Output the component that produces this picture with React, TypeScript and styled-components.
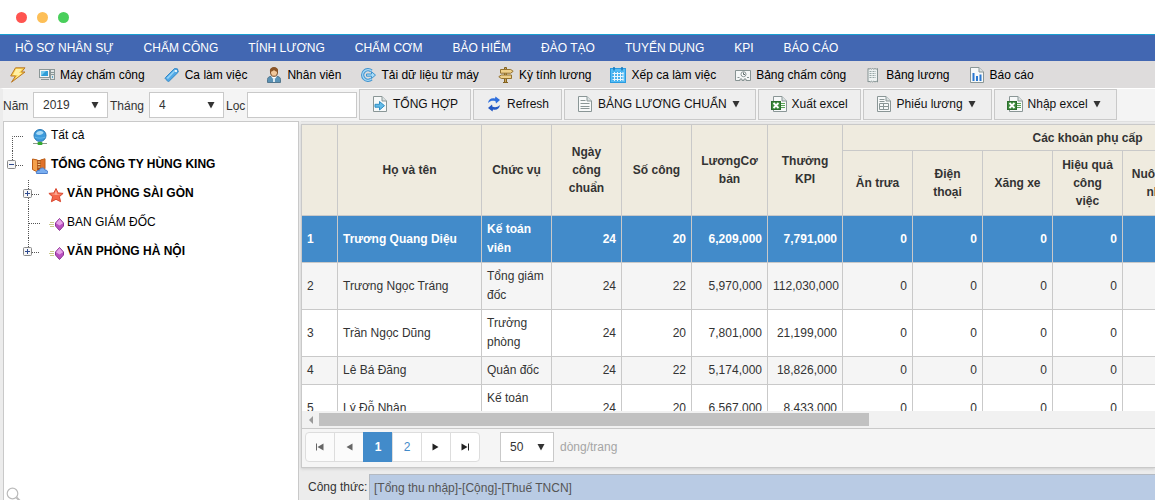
import React from 'react';
import styled, { createGlobalStyle, css } from 'styled-components';

const line = '#c9c9c9';
const blue = '#428bca';

const GlobalStyle = createGlobalStyle`
  *, *::before, *::after { box-sizing: border-box; }
  body { margin: 0; background: #fff; }
  body, button, input, select, table {
    font-family: "Liberation Sans", Arial, sans-serif;
    font-size: 12px;
    color: #333;
  }
`;

const Page = styled.div`
  display: flex;
  flex-direction: column;
  height: 100vh;
  overflow: hidden;
  white-space: nowrap;
`;

const TitleBar = styled.header`
  display: flex;
  align-items: center;
  gap: 10px;
  flex: none;
  height: 34px;
  padding-left: 16px;
`;

const Dot = styled.span<{ $color: string }>`
  width: 11px;
  height: 11px;
  border-radius: 50%;
  background: ${(p) => p.$color};
`;

const Menu = styled.nav`
  display: flex;
  flex: none;
  height: 27px;
  border-top: 1px solid #1a9fd0;
  background: #4267b2;
`;

const MenuLink = styled.a`
  display: flex;
  align-items: center;
  padding: 0 15px;
  color: #fff;
  text-decoration: none;
`;

const ShortcutBar = styled.nav`
  display: flex;
  align-items: center;
  gap: 19px;
  flex: none;
  height: 27px;
  padding-left: 9px;
  background: #dedcdc;
`;

const Shortcut = styled.a`
  display: flex;
  align-items: center;
  gap: 5px;
  color: #000;
  text-decoration: none;
`;

const QuickStart = styled(Shortcut)`
  margin-right: -7px;
`;

const Toolbar = styled.div`
  display: flex;
  align-items: flex-start;
  gap: 2px;
  flex: none;
  height: 33px;
  border-top: 1px solid #fff;
  border-left: 3px solid #ececec;
  background: #f4f4f4;
`;

const Field = styled.div`
  display: flex;
  align-items: center;
  height: 32px;
`;

const FieldLabel = styled.label<{ $width: number }>`
  width: ${(p) => p.$width}px;
  padding-top: 2px;
`;

const SelectBox = styled.span<{ $width: number }>`
  position: relative;
  display: block;
  width: ${(p) => p.$width}px;

  svg {
    position: absolute;
    right: 5px;
    top: 50%;
    margin-top: -5px;
    pointer-events: none;
  }
`;

const Select = styled.select<{ $height?: number }>`
  appearance: none;
  display: block;
  width: 100%;
  height: ${(p) => p.$height ?? 26}px;
  padding: 0 9px;
  border: 1px solid ${line};
  border-radius: 0;
  background: #fff;
`;

const FilterInput = styled.input`
  width: 110px;
  height: 26px;
  padding: 0 5px;
  border: 1px solid ${line};
  background: #fff;
`;

const ToolButton = styled.button`
  display: flex;
  align-items: center;
  gap: 5px;
  flex: none;
  height: 31px;
  padding: 0 12px 2px;
  border: 1px solid ${line};
  background: #eee;
  color: #111;
`;

const Main = styled.main`
  display: grid;
  grid-template-columns: 296px minmax(0, 1fr);
  grid-template-rows: minmax(0, 1fr);
  gap: 2px;
  flex: 1;
  min-height: 0;
  padding-left: 3px;
  background: #ececec;
`;

const TreePanel = styled.aside`
  display: flex;
  flex-direction: column;
  justify-content: space-between;
  overflow: hidden;
  border: 1px solid ${line};
  border-bottom: 0;
  background: #fff;
`;

const TreeList = styled.ul`
  margin: 0;
  padding: 0;
  list-style: none;
`;

const TreeRow = styled.li<{ $level: number; $bold?: boolean }>`
  display: flex;
  align-items: center;
  height: 29px;
  padding-left: ${(p) => p.$level * 16}px;
  color: #000;
  font-weight: ${(p) => (p.$bold ? 'bold' : 'normal')};
`;

const TreeToggle = styled.button`
  display: block;
  width: 24px;
  height: 29px;
  margin-right: 4px;
  padding: 0;
  border: 0;
  background: none;
`;

const TreeLines = styled.span`
  width: 24px;
  height: 29px;
  margin-right: 4px;
`;

const TreeName = styled.span`
  padding: 0 0 3px 3px;
`;

const TreeFooter = styled.div`
  height: 14px;
  padding-left: 1px;
`;

const Content = styled.section`
  display: flex;
  flex-direction: column;
  min-width: 0;
  min-height: 0;
  padding-top: 2px;
  border-top: 1px solid #e0e0e0;
`;

const GridBox = styled.div`
  display: flex;
  flex-direction: column;
  flex: 1;
  min-height: 0;
  border: solid ${line};
  border-width: 1px 0 1px 1px;
  box-shadow: 0 1px 3px #ccc;
  background: #fff;
`;

const GridBody = styled.div`
  flex: 1;
  min-height: 0;
  overflow: hidden;
`;

const Table = styled.table`
  table-layout: fixed;
  width: 1030px;
  border-collapse: separate;
  border-spacing: 0;
  white-space: normal;
`;

const Th = styled.th<{ $height?: number }>`
  height: ${(p) => (p.$height ? `${p.$height}px` : 'auto')};
  padding: 0 8px;
  border-bottom: 1px solid ${line};
  border-left: 1px solid ${line};
  background: #efebdf;
  line-height: 18px;
  text-align: center;

  thead tr:first-child &:first-child { border-left: 0; }
`;

const Td = styled.td<{ $num?: boolean }>`
  padding: 4px 5px;
  border-bottom: 1px solid ${line};
  border-left: 1px solid ${line};
  line-height: 19px;
  text-align: ${(p) => (p.$num ? 'right' : 'left')};

  &:first-child { border-left: 0; }
`;

const Tr = styled.tr<{ $selected: boolean; $striped: boolean }>`
  background: ${(p) => (p.$striped ? '#f5f5f5' : '#fff')};
  ${(p) =>
    p.$selected &&
    css`
      background: ${blue};
      color: #fff;
      font-weight: bold;
    `}
`;

const ScrollTrack = styled.div`
  display: flex;
  align-items: center;
  flex: none;
  height: 17px;
  background: #f1f1f1;
`;

const ScrollArrow = styled.span`
  display: flex;
  justify-content: center;
  width: 17px;
`;

const ScrollThumb = styled.div`
  width: 64.5%;
  height: 13px;
  background: #c1c1c1;
`;

const Pager = styled.div`
  display: flex;
  align-items: center;
  flex: none;
  height: 39px;
  padding: 0 0 2px 3px;
  border-top: 1px solid ${line};
  background: #f5f5f5;
`;

const PageButton = styled.button<{ $active?: boolean }>`
  display: flex;
  align-items: center;
  justify-content: center;
  width: 30px;
  height: 30px;
  margin-right: -1px;
  padding: 0;
  border: 1px solid ${(p) => (p.$active ? blue : '#ddd')};
  background: ${(p) => (p.$active ? blue : '#fff')};
  color: ${(p) => (p.$active ? '#fff' : blue)};
  font-weight: ${(p) => (p.$active ? 'bold' : 'normal')};

  &:first-child { border-radius: 4px 0 0 4px; }
  &:disabled { background: #fbfbfb; }
`;

const PageButtons = styled.div`
  display: flex;
  margin-right: 21px;

  button:last-child { border-radius: 0 4px 4px 0; }
`;

const PageSizeLabel = styled.label`
  padding-left: 6px;
  color: #a5a5a5;
`;

const Formula = styled.div`
  display: grid;
  grid-template-columns: 68px minmax(0, 1fr);
  align-items: center;
  flex: none;
  height: 32px;
  padding-top: 6px;
`;

const FormulaLabel = styled.label`
  padding-left: 7px;
`;

const FormulaInput = styled.input`
  width: 100%;
  height: 26px;
  padding: 0 4px;
  border: solid #b4bac2;
  border-width: 1px 0 0 1px;
  background: #b9cbe4;
  color: #555;
`;

const Svg = ({ children }: { children: React.ReactNode }) => (
  <svg width="16" height="16" viewBox="0 0 16 16" aria-hidden="true">{children}</svg>
);

const Caret = ({ width = 12 }: { width?: number }) => (
  <svg width={width} height="10" viewBox={`0 0 ${width} 10`} aria-hidden="true">
    <path d="M0.5 2h7l-3.5 6.5z" fill="#333" />
  </svg>
);

const BoltIcon = () => (
  <svg width="18" height="16" viewBox="0 0 18 16" aria-hidden="true">
    <path d="M6.500 .8h9.500L12.500 5h3.500L2.500 15.200 6.500 9H1.700z" fill="#fbd34b" stroke="#b9782a" strokeLinejoin="round" />
    <path d="M7 2h6L10 6h3L6.500 11.500 8.800 8H4z" fill="#fff0a5" />
  </svg>
);

const ComputerIcon = () => (
  <Svg>
    <rect x=".5" y="2.500" width="10" height="8" fill="#f4f6f6" stroke="#8b9797" />
    <rect x="2" y="4" width="7" height="5" fill="#2f9ed8" />
    <path d="M2 9l5-5H2z" fill="#74c8ec" />
    <path d="M2 12.500h8" stroke="#8b9797" />
    <rect x="11.500" y="2.500" width="4" height="10" fill="#dfe4e4" stroke="#8b9797" />
    <path d="M12 5.500h3M12 7.500h3" stroke="#8b9797" />
    <rect x="13" y="9" width="1" height="2" fill="#5ba4c8" />
  </Svg>
);

const TagIcon = () => (
  <Svg>
    <path d="M1.500 10.500L10.500 1.600l3 .3.800 3.200L5.300 14c-.6.600-1.200.6-1.700 0L1.500 12c-.5-.5-.5-1 0-1.500z" fill="#52a9e6" stroke="#2f86c6" />
    <path d="M2.500 11L10.800 2.800l1.500.2L4 12z" fill="#95d3f7" />
    <circle cx="12" cy="4" r="1.100" fill="#fff" />
  </Svg>
);

const PersonIcon = () => (
  <Svg>
    <path d="M1.500 15.500v-3c0-2 1.500-3 4-3.300h5c2.500.3 4 1.300 4 3.300v3z" fill="#5b92b5" stroke="#54778d" />
    <path d="M5 9.200L8 13l3-3.800z" fill="#fff" />
    <path d="M8 11v4" stroke="#dbe8ef" strokeWidth="2" />
    <ellipse cx="8" cy="5" rx="3.500" ry="4.300" fill="#f2c89b" stroke="#7a4a22" />
    <path d="M4 5C3.500 1 6 .3 8 .3s4.500.7 4 4.700c-2-.3-3-1-4-2-1 1.200-2.400 1.800-4 2z" fill="#8a5528" />
  </Svg>
);

const SyncIcon = () => (
  <Svg>
    <path d="M11.500 4A5.300 5.300 0 1 0 11.500 12" fill="none" stroke="#3f93cf" strokeWidth="3.400" />
    <path d="M11.500 4A5.300 5.300 0 1 0 11.500 12" fill="none" stroke="#a5d8f6" strokeWidth="1.400" />
    <path d="M6.500 7h5V4.700l4 3.400-4 3.400V9.200h-5z" fill="#a9dcf7" stroke="#3f93cf" />
  </Svg>
);

const SignIcon = () => (
  <Svg>
    <path d="M6.500.500h2v15h-2z" fill="#c9a45a" stroke="#83621f" />
    <path d="M2.500 2.500h10.200l2.500 1.800-2.500 1.900H2.500z" fill="#efd08a" stroke="#94722f" />
    <path d="M13.500 8H3.300L.8 9.700l2.500 1.800h10.200z" fill="#efd08a" stroke="#94722f" />
    <path d="M5 15.500h5" stroke="#83621f" />
  </Svg>
);

const CalendarIcon = () => (
  <Svg>
    <rect x=".5" y="1.500" width="15" height="14" fill="#55bdf5" stroke="#2a9be0" />
    <rect x="2" y="4.500" width="12" height="9.500" fill="#45b0ee" />
    <path d="M2.500 6.500h11M2.500 9.500h11M2.500 12.500h11M4.500 5v9M7.500 5v9M10.500 5v9M13 5v9" stroke="#e8f6fd" />
    <path d="M4 0v3.500M12 0v3.500" stroke="#1678bb" strokeWidth="1.500" />
  </Svg>
);

const TimeCardIcon = () => (
  <Svg>
    <path d="M.5 3.500h15v10H11v-1.500H9v1.500H7V12H5v1.500H.5z" fill="#f5f7f7" stroke="#879393" />
    <circle cx="8.500" cy="7.200" r="2.500" fill="#fff" stroke="#879393" />
    <path d="M8.500 5.500v2H10" fill="none" stroke="#5f6c6c" />
    <path d="M2.500 10.500h2M12 10.500h2" stroke="#879393" />
  </Svg>
);

const ReceiptIcon = () => (
  <Svg>
    <path d="M3 1.500l1 .7 1.200-.7 1.200.7 1.200-.7 1.200.7 1.200-.7 1.200.7 1.300-.7v13.500l-1.300-.8-1.200.8-1.200-.8-1.200.8-1.200-.8-1.200.8-1.200-.8-1 .8z" fill="#eef2f2" stroke="#859393" />
    <path d="M4.500 4.500h6.500M4.500 6.500h6.500M4.500 8.500h6.500M4.500 10.500h6.500" stroke="#97a6a6" strokeDasharray="2 1" />
  </Svg>
);

const Sheet = ({ children }: { children: React.ReactNode }) => (
  <Svg>
    <path d="M1.500.500H10l4.500 4.500v10.500h-13z" fill="#f7f9f9" stroke="#8a9696" />
    <path d="M10 .5V5h4.500" fill="#dbe2e2" stroke="#8a9696" />
    {children}
  </Svg>
);

const ChartIcon = () => (
  <Sheet>
    <path d="M4.500 14V6M8 14V9M11.500 14V7.500" stroke="#2b78d0" strokeWidth="2" />
  </Sheet>
);

const ExportIcon = () => (
  <Sheet>
    <path d="M3 8.300h4.500V5.500l5 4.200-5 4.300v-2.800H3z" fill="#63bbe8" stroke="#2f8dc2" />
  </Sheet>
);

const ListIcon = () => (
  <Sheet>
    <path d="M3.500 4.500h5M3.500 7.500h9M3.500 10.500h9M3.500 12.500h9" stroke="#8a9696" />
  </Sheet>
);

const FormIcon = () => (
  <Sheet>
    <path d="M3.500 3.500h5M3.500 5.500h5" stroke="#8a9696" />
    <path d="M3.500 7.500h9v6h-9zM3.500 10.500h9M7.500 7.500v6" fill="none" stroke="#8a9696" />
  </Sheet>
);

const ExcelIcon = () => (
  <Svg>
    <path d="M2.500.500H11l4.500 4.500v10.500h-13z" fill="#f7f9f9" stroke="#8a9696" />
    <path d="M11 .5V5h4.500" fill="#dbe2e2" stroke="#8a9696" />
    <path d="M10 7.500h4M10 9.500h4M10 11.500h4" stroke="#58a555" />
    <rect x=".5" y="5.500" width="9" height="8" fill="#3d8b3c" stroke="#2c6e2e" />
    <path d="M2.500 7l5 5M7.500 7l-5 5" stroke="#fff" strokeWidth="1.800" />
  </Svg>
);

const RefreshIcon = () => (
  <Svg>
    <path d="M2 7c.5-3.800 3.500-5.500 7-4.500L9.500 .5l4.500 3.500-4 3.500-.5-2.300C6.500 4.500 4.500 4.800 2 7z" fill="#2f6fdd" />
    <path d="M14 9c-.5 3.800-3.500 5.500-7 4.500l-.5 2-4.500-3.500L6 8.500l.5 2.300c3 .7 5 .4 7.500-1.800z" fill="#2458c4" />
  </Svg>
);

const GlobeIcon = () => (
  <Svg>
    <circle cx="8" cy="6.500" r="6" fill="#3d9bdc" stroke="#2878b4" />
    <path d="M4 5C4.500 1.800 9 .8 11.500 3.300 11 6 6.500 7 4 5z" fill="#a9daf5" />
    <path d="M2.500 8c3 1.500 8 1.500 11 0" fill="none" stroke="#67b7e8" />
    <path d="M8 12v2M1 14.500h14" stroke="#8a9a8a" />
    <rect x="5.500" y="13" width="5" height="3" rx="1" fill="#35a92f" />
  </Svg>
);

const CompanyIcon = () => (
  <Svg>
    <path d="M.5 1l5 1v12l-5-2.500z" fill="#f5a14b" stroke="#bb5c16" />
    <path d="M5.500 2h3v12h-3z" fill="#a6501b" />
    <path d="M8.500 2L13 .8v10L8.500 13z" fill="#e0722a" stroke="#bb5c16" />
    <path d="M5.800 4h2.500M5.800 6.500h2.500M5.800 9h2.500" stroke="#f8d28f" strokeWidth="1.200" />
    <path d="M4.500 15.500c-.8-2 1-3.500 2.800-3C7.500 10 12 8.500 13 12c2.500-.3 3 2 2.300 3.500z" fill="#79aef0" stroke="#4c7fcc" />
  </Svg>
);

const StarIcon = () => (
  <Svg>
    <path d="M8 1.500l2.100 4.400 5 .5-3.700 3.300 1.200 5L8 12.300 3.400 14.700l1.200-5L.9 6.400l5-.5z" fill="#f4674b" stroke="#d9472e" />
    <path d="M8 3l1.300 4H14c-3 .5-6.500 2-11-.2L6.500 6.700z" fill="#fba993" />
  </Svg>
);

const GemIcon = () => (
  <Svg>
    <path d="M2 6.500h4M1 8.500h5M2 10.500h4" stroke="#c9c98c" />
    <path d="M11.500 2.500l4 4.500v3l-4 4.500-4-4.500V7z" fill="#b94fc0" stroke="#8d3594" />
    <path d="M11.500 3l3.500 4.300-3.500 2.200L8 7.300z" fill="#e7a3e8" />
  </Svg>
);

const MagnifierIcon = () => (
  <Svg>
    <circle cx="7.500" cy="7.500" r="5.300" fill="none" stroke="#bbb" strokeWidth="1.200" />
    <path d="M11.500 11.500l4 4" stroke="#bbb" strokeWidth="2" />
  </Svg>
);

const Connector = ({ d, x, sign }: { d: string; x?: number; sign?: '+' | '-' }) => (
  <svg width="24" height="29" viewBox="0 0 24 29" aria-hidden="true">
    <path d={d} stroke="#555" strokeDasharray="1 1" fill="none" />
    {sign && (
      <g>
        <rect x={x} y="9.500" width="8" height="8" rx="1" fill="#f6f6f6" stroke="#888" />
        <path d={sign === '+' ? 'M5 13.500h5M7.500 11v5' : 'M5 13.500h5'} stroke="#2f4b8f" />
      </g>
    )}
  </svg>
);

const ArrowIcon = ({ dir, bar, color }: { dir: 'left' | 'right'; bar?: boolean; color: string }) => (
  <svg width="10" height="10" viewBox="0 0 10 10" aria-hidden="true">
    <path d={dir === 'left' ? 'M8.500 1.500v7L2.500 5z' : 'M1.500 1.500v7l6-3.500z'} fill={color} />
    {bar && <path d={dir === 'left' ? 'M1.500 1.500v7' : 'M8.500 1.500v7'} stroke={color} />}
  </svg>
);

const menu = ['HỒ SƠ NHÂN SỰ', 'CHẤM CÔNG', 'TÍNH LƯƠNG', 'CHẤM CƠM', 'BẢO HIỂM', 'ĐÀO TẠO', 'TUYỂN DỤNG', 'KPI', 'BÁO CÁO'];

const shortcuts: [string, React.ComponentType][] = [
  ['Máy chấm công', ComputerIcon],
  ['Ca làm việc', TagIcon],
  ['Nhân viên', PersonIcon],
  ['Tải dữ liệu từ máy', SyncIcon],
  ['Kỳ tính lương', SignIcon],
  ['Xếp ca làm việc', CalendarIcon],
  ['Bảng chấm công', TimeCardIcon],
  ['Bảng lương', ReceiptIcon],
  ['Báo cáo', ChartIcon],
];

const tools: [string, React.ComponentType, boolean][] = [
  ['TỔNG HỢP', ExportIcon, false],
  ['Refresh', RefreshIcon, false],
  ['BẢNG LƯƠNG CHUẨN', ListIcon, true],
  ['Xuất excel', ExcelIcon, false],
  ['Phiếu lương', FormIcon, true],
  ['Nhập excel', ExcelIcon, true],
];

const columns = [35, 144, 70, 70, 70, 76, 75, 70, 70, 70, 70, 70, 70, 70];
const mainHeads = ['', 'Họ và tên', 'Chức vụ', 'Ngày công chuẩn', 'Số công', 'LươngCơ bản', 'Thưởng KPI'];
const allowances = ['Ăn trưa', 'Điện thoại', 'Xăng xe', 'Hiệu quả công việc', 'Nuôi con nhỏ'];

const employees = [
  ['Trương Quang Diệu', 'Kế toán viên', '24', '20', '6,209,000', '7,791,000', '0', '0', '0', '0'],
  ['Trương Ngọc Tráng', 'Tổng giám đốc', '24', '22', '5,970,000', '112,030,000', '0', '0', '0', '0'],
  ['Trần Ngọc Dũng', 'Trưởng phòng', '24', '20', '7,801,000', '21,199,000', '0', '0', '0', '0'],
  ['Lê Bá Đăng', 'Quản đốc', '24', '22', '5,174,000', '18,826,000', '0', '0', '0', '0'],
  ['Lý Đỗ Nhân', 'Kế toán viên', '24', '20', '6,567,000', '8,433,000', '0', '0', '0', '0'],
];

export default function App() {
  return (
    <Page>
      <GlobalStyle />
      <TitleBar>
        <Dot $color="#ff5450" />
        <Dot $color="#fdbf57" />
        <Dot $color="#49cf5b" />
      </TitleBar>

      <Menu>
        {menu.map((name) => <MenuLink key={name} href="#">{name}</MenuLink>)}
      </Menu>

      <ShortcutBar>
        <QuickStart href="#" aria-label="⚡"><BoltIcon /></QuickStart>
        {shortcuts.map(([name, Icon]) => (
          <Shortcut key={name} href="#"><Icon />{name}</Shortcut>
        ))}
      </ShortcutBar>

      <Toolbar>
        <Field>
          <FieldLabel htmlFor="year" $width={30}>Năm</FieldLabel>
          <SelectBox $width={75}>
            <Select id="year" defaultValue="2019"><option>2019</option></Select>
            <Caret />
          </SelectBox>
        </Field>
        <Field>
          <FieldLabel htmlFor="month" $width={39}>Tháng</FieldLabel>
          <SelectBox $width={75}>
            <Select id="month" defaultValue="4"><option>4</option></Select>
            <Caret />
          </SelectBox>
        </Field>
        <Field>
          <FieldLabel htmlFor="filter" $width={21}>Lọc</FieldLabel>
          <FilterInput id="filter" type="text" />
        </Field>
        {tools.map(([name, Icon, hasMenu]) => (
          <ToolButton key={name} type="button">
            <Icon />{name}{hasMenu && <Caret width={11} />}
          </ToolButton>
        ))}
      </Toolbar>

      <Main>
        <TreePanel>
          <TreeList>
            <TreeRow $level={0}>
              <TreeLines><Connector d="M19 14.500H8.500V29" /></TreeLines>
              <GlobeIcon /><TreeName>Tất cả</TreeName>
            </TreeRow>
            <TreeRow $level={0} $bold>
              <TreeToggle type="button" aria-expanded="true">
                <Connector d="M8.500 0v10M12 14.500h8" x={3.5} sign="-" />
              </TreeToggle>
              <CompanyIcon /><TreeName>TỔNG CÔNG TY HÙNG KING</TreeName>
            </TreeRow>
            <TreeRow $level={1} $bold>
              <TreeToggle type="button" aria-expanded="false">
                <Connector d="M8.500 0v29M12 14.500h8" x={3.5} sign="+" />
              </TreeToggle>
              <StarIcon /><TreeName>VĂN PHÒNG SÀI GÒN</TreeName>
            </TreeRow>
            <TreeRow $level={1}>
              <TreeLines><Connector d="M8.500 0v29M9 14.500h11" /></TreeLines>
              <GemIcon /><TreeName>BAN GIÁM ĐỐC</TreeName>
            </TreeRow>
            <TreeRow $level={1} $bold>
              <TreeToggle type="button" aria-expanded="false">
                <Connector d="M8.500 0v10M12 14.500h8" x={3.5} sign="+" />
              </TreeToggle>
              <GemIcon /><TreeName>VĂN PHÒNG HÀ NỘI</TreeName>
            </TreeRow>
          </TreeList>
          <TreeFooter><MagnifierIcon /></TreeFooter>
        </TreePanel>

        <Content>
          <GridBox>
            <GridBody>
              <Table>
                <colgroup>
                  {columns.map((width, i) => <col key={i} width={width} />)}
                </colgroup>
                <thead>
                  <tr>
                    {mainHeads.map((name) => <Th key={name} rowSpan={2}>{name}</Th>)}
                    <Th colSpan={7} $height={26}>Các khoản phụ cấp</Th>
                  </tr>
                  <tr>
                    {allowances.map((name) => <Th key={name} $height={65}>{name}</Th>)}
                    <Th colSpan={2} />
                  </tr>
                </thead>
                <tbody>
                  {employees.map(([name, role, ...amounts], i) => (
                    <Tr key={name} $selected={i === 0} $striped={i % 2 === 1}>
                      <Td>{i + 1}</Td>
                      <Td>{name}</Td>
                      <Td>{role}</Td>
                      {amounts.map((amount, k) => <Td key={k} $num>{amount}</Td>)}
                      <Td colSpan={3} />
                    </Tr>
                  ))}
                </tbody>
              </Table>
            </GridBody>
            <ScrollTrack>
              <ScrollArrow>
                <svg width="10" height="10" viewBox="0 0 10 10" aria-hidden="true">
                  <path d="M7 1v8L3 5z" fill="#999" />
                </svg>
              </ScrollArrow>
              <ScrollThumb />
            </ScrollTrack>
            <Pager>
              <PageButtons>
                <PageButton type="button" disabled><ArrowIcon dir="left" bar color="#666" /></PageButton>
                <PageButton type="button" disabled><ArrowIcon dir="left" color="#666" /></PageButton>
                <PageButton type="button" $active>1</PageButton>
                <PageButton type="button">2</PageButton>
                <PageButton type="button"><ArrowIcon dir="right" color="#222" /></PageButton>
                <PageButton type="button"><ArrowIcon dir="right" bar color="#222" /></PageButton>
              </PageButtons>
              <SelectBox $width={54}>
                <Select id="pageSize" $height={30} defaultValue="50"><option>50</option></Select>
                <Caret />
              </SelectBox>
              <PageSizeLabel htmlFor="pageSize">dòng/trang</PageSizeLabel>
            </Pager>
          </GridBox>
          <Formula>
            <FormulaLabel htmlFor="formula">Công thức:</FormulaLabel>
            <FormulaInput id="formula" defaultValue="[Tổng thu nhập]-[Cộng]-[Thuế TNCN]" />
          </Formula>
        </Content>
      </Main>
    </Page>
  );
}
